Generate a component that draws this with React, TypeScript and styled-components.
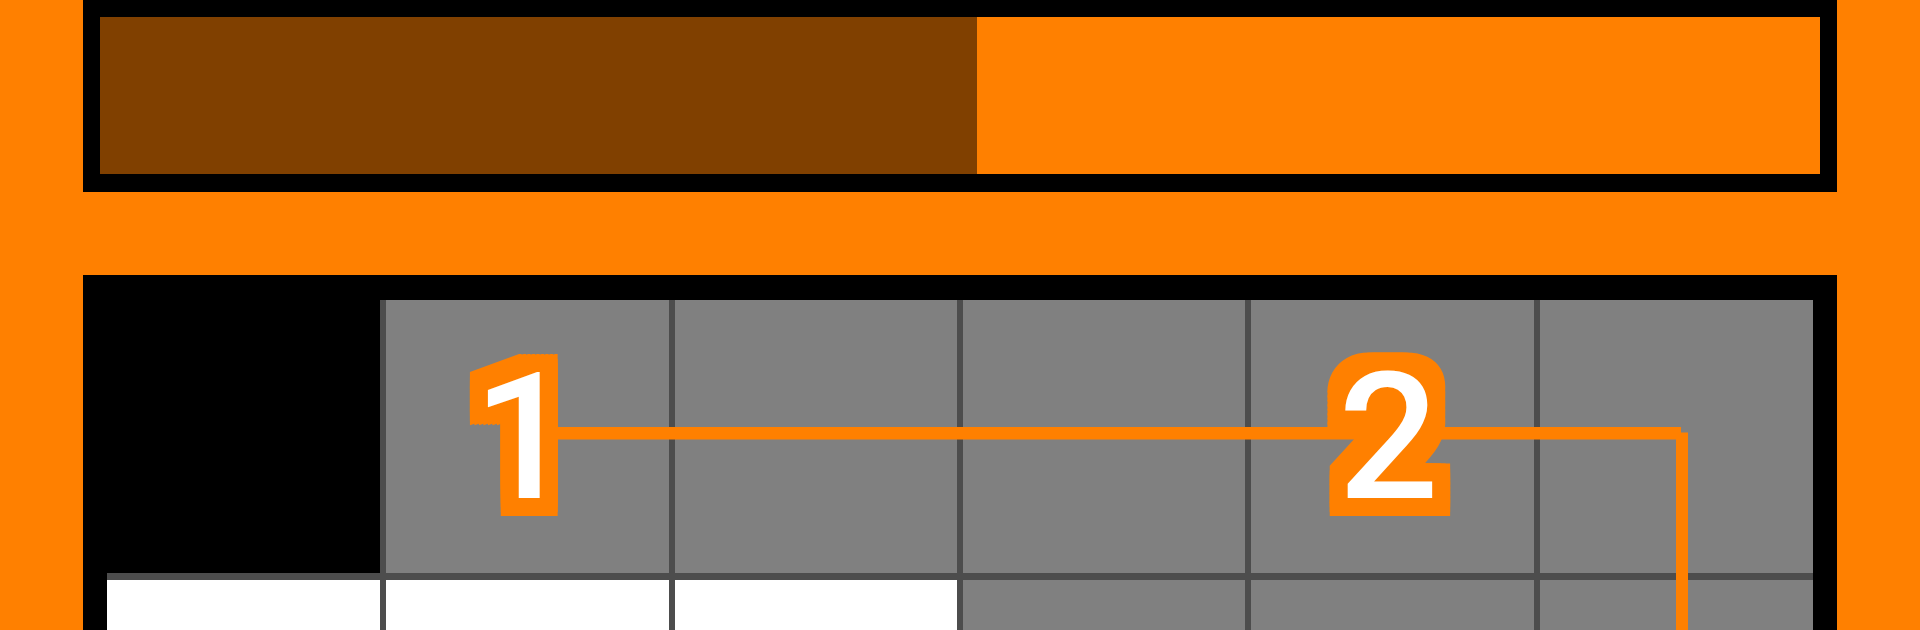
import React from "react";
import styled, { createGlobalStyle } from "styled-components";

const ORANGE = "#ff8000";
const BROWN = "#804000";
const TILE_GREY = "#808080";
const LINE_GREY = "#4d4d4d";

const GlobalStyle = createGlobalStyle`
  html, body {
    margin: 0;
    padding: 0;
    background: ${ORANGE};
    overflow: hidden;
  }
  body {
    font-family: Roboto, "Liberation Sans", sans-serif;
  }
`;

// Square outline around the digits: a grid of hard shadows gives a blocky halo.
const haloSteps = [-18, -13.5, -9, -4.5, 0, 4.5, 9, 13.5, 18];
const blockHalo = haloSteps
  .flatMap((dx) => haloSteps.map((dy) => `${dx}px ${dy}px 0 ${ORANGE}`))
  .join(", ");

const Page = styled.div`
  display: flex;
  flex-direction: column;
  gap: 83px;
  padding: 0 83px;
  height: 630px;
`;

const ProgressFrame = styled.div`
  flex: none;
  box-sizing: border-box;
  height: 192px;
  border: 17px solid #000;
  border-bottom-width: 18px;
  background: ${ORANGE};
  display: flex;
`;

const ProgressFill = styled.div`
  height: 100%;
  background: ${BROWN};
`;

const Board = styled.div`
  position: relative;
  flex: none;
  background: #000;
  border: 24px solid #000;
  border-top-width: 25px;
  border-bottom: none;
`;

const Grid = styled.div`
  display: grid;
  grid-template-columns: 273px 283px 282px 282px 283px 273px;
  grid-template-rows: 273px 273px;
  column-gap: 6px;
  row-gap: 7px;
  background: ${LINE_GREY};
`;

type Tone = "void" | "open" | "lit";

const toneColor: Record<Tone, string> = {
  void: "#000",
  open: TILE_GREY,
  lit: "#fff",
};

const Cell = styled.div<{ $tone: Tone }>`
  background: ${(p) => toneColor[p.$tone]};
  display: flex;
  align-items: center;
  justify-content: center;
`;

const Digit = styled.span`
  position: relative;
  z-index: 2;
  font-family: Roboto, "Liberation Sans", sans-serif;
  font-weight: 500;
  font-size: 177px;
  line-height: 1;
  color: #fff;
  text-shadow: ${blockHalo};
  transform: translate(-4px, 1px);
  user-select: none;
`;

const PathLayer = styled.svg`
  position: absolute;
  left: 0;
  top: 0;
  z-index: 1;
  overflow: visible;
  pointer-events: none;
`;

const progress = 0.51;

const board: { tone: Tone; label?: string }[][] = [
  [
    { tone: "void" },
    { tone: "open", label: "1" },
    { tone: "open" },
    { tone: "open" },
    { tone: "open", label: "2" },
    { tone: "open" },
  ],
  [
    { tone: "lit" },
    { tone: "lit" },
    { tone: "lit" },
    { tone: "open" },
    { tone: "open" },
    { tone: "open" },
  ],
];

export default function App() {
  return (
    <>
      <GlobalStyle />
      <Page>
        <ProgressFrame>
          <ProgressFill style={{ width: `${progress * 100}%` }} />
        </ProgressFrame>
        <Board>
          <Grid>
            {board.flatMap((row, r) =>
              row.map((cell, c) => (
                <Cell key={`${r}-${c}`} $tone={cell.tone}>
                  {cell.label && <Digit>{cell.label}</Digit>}
                </Cell>
              ))
            )}
          </Grid>
          <PathLayer width="1706" height="560" viewBox="0 0 1706 560">
            <rect x="433" y="127" width="1141" height="12.5" fill={ORANGE} />
            <rect x="1569" y="132.5" width="12" height="440" fill={ORANGE} />
          </PathLayer>
        </Board>
      </Page>
    </>
  );
}
